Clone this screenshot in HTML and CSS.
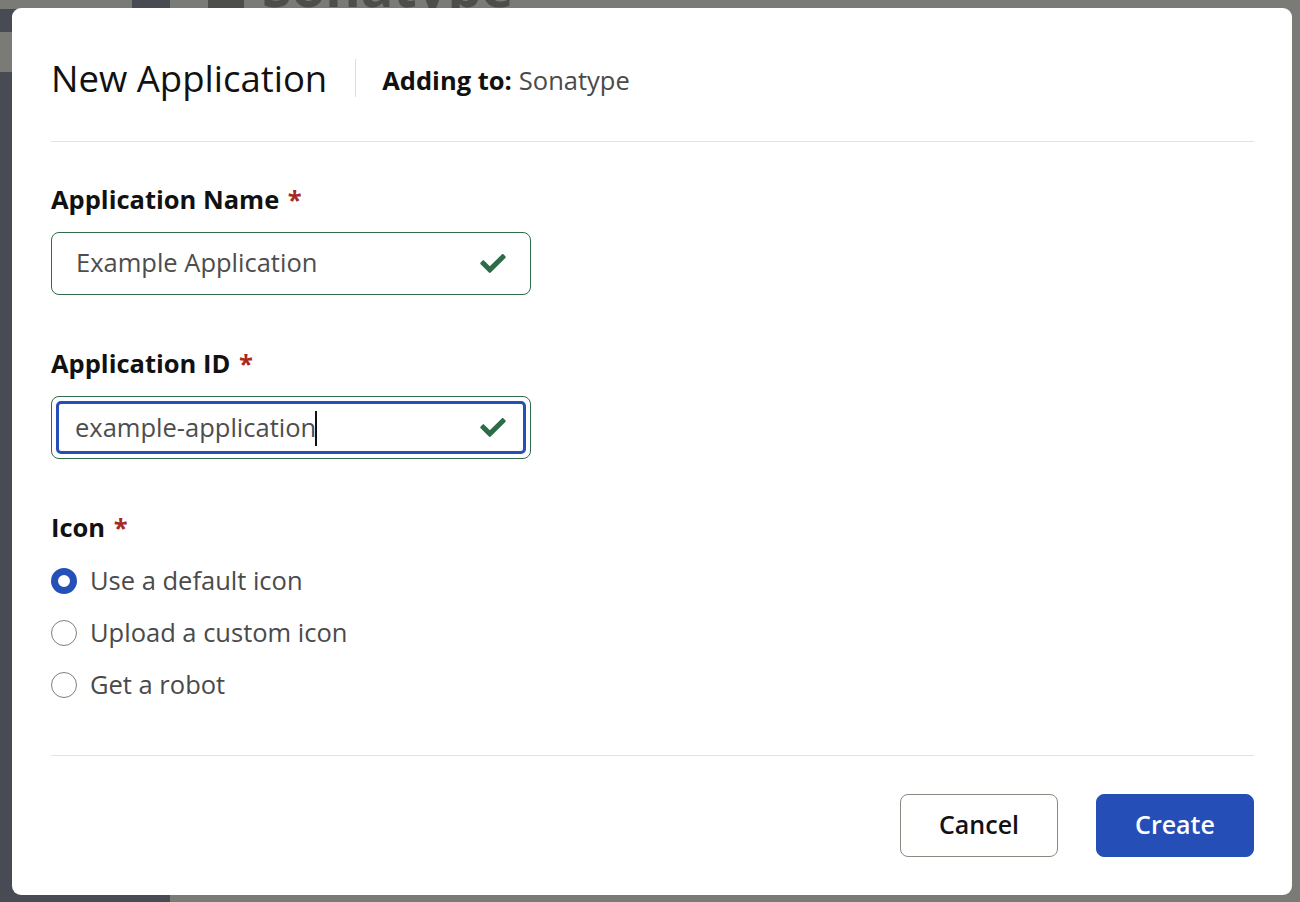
FILE: index.html
```html
<!DOCTYPE html>
<html>
<head>
<meta charset="utf-8">
<link rel="stylesheet" href="styles.css">
</head>
<body>
<div class="page">
  <aside class="sidebar">
    <div class="side-top"><span class="side-top-a"></span><span class="side-top-b"></span></div>
    <div class="side-item"></div>
    <div class="side-item active"></div>
  </aside>
  <main class="main">
    <div class="brand"><span class="brand-mark"></span><span class="brand-name">Sonatype</span></div>
  </main>
</div>

<div class="dialog">
  <header class="dialog-header">
    <h1 class="dialog-title">New Application</h1>
    <div class="dialog-sub"><strong>Adding to:</strong> Sonatype</div>
  </header>

  <section class="dialog-body">
    <div class="field">
      <div class="label">Application Name <span class="req">*</span></div>
      <div class="input valid">
        <span class="input-text">Example Application</span>
        <svg class="check" viewBox="0 0 512 382" width="26" height="19"><path d="M173.9 374.4l-166.4-166.4c-10-10-10-26.2 0-36.2l36.2-36.2c10-10 26.2-10 36.2 0L192 247.7 432.1 7.6c10-10 26.2-10 36.2 0l36.2 36.2c10 10 10 26.2 0 36.2l-294.4 294.4c-10 10-26.2 10-36.2 0z"/></svg>
      </div>
    </div>

    <div class="field">
      <div class="label">Application ID <span class="req">*</span></div>
      <div class="input valid focused">
        <div class="focus-ring">
          <span class="input-text">example-application<span class="caret"></span></span>
          <svg class="check" viewBox="0 0 512 382" width="26" height="19"><path d="M173.9 374.4l-166.4-166.4c-10-10-10-26.2 0-36.2l36.2-36.2c10-10 26.2-10 36.2 0L192 247.7 432.1 7.6c10-10 26.2-10 36.2 0l36.2 36.2c10 10 10 26.2 0 36.2l-294.4 294.4c-10 10-26.2 10-36.2 0z"/></svg>
        </div>
      </div>
    </div>

    <div class="field icon-field">
      <div class="label">Icon <span class="req">*</span></div>
      <div class="radios">
        <label class="radio"><span class="radio-dot checked"></span>Use a default icon</label>
        <label class="radio"><span class="radio-dot"></span>Upload a custom icon</label>
        <label class="radio"><span class="radio-dot"></span>Get a robot</label>
      </div>
    </div>
  </section>

  <footer class="dialog-footer">
    <button class="btn btn-secondary">Cancel</button>
    <button class="btn btn-primary">Create</button>
  </footer>
</div>
</body>
</html>
```

FILE: styles.css
```css
* { box-sizing: border-box; }
html, body { margin: 0; padding: 0; }
body {
  width: 1300px;
  height: 902px;
  overflow: hidden;
  background: #7a7a76;
  font-family: "Open Sans", "Noto Sans", "Liberation Sans", sans-serif;
}

.page { display: flex; height: 902px; }
.sidebar {
  width: 170px;
  background: #484b54;
  display: flex;
  flex-direction: column;
}
.side-top { display: flex; height: 9px; }
.side-top-a { width: 132px; background: #7a7a76; }
.side-top-b { flex: 1; background: #484b54; }
.side-item { height: 23px; }
.side-item.active { height: 40px; background: #7a7a76; }
.main { flex: 1; background: #7a7a76; }
.brand {
  display: flex;
  align-items: flex-end;
  gap: 18px;
  margin-left: 38px;
  height: 9px;
  overflow: hidden;
}
.brand-mark { width: 36px; height: 30px; background: #4d4e4a; flex: none; }
.brand-name {
  font-size: 54px;
  font-weight: 700;
  line-height: 1;
  color: #4d4e4a;
  margin-bottom: -4px;
}

.dialog {
  position: absolute;
  left: 12px;
  top: 8px;
  width: 1280px;
  height: 887px;
  background: #fff;
  border-radius: 9px;
  padding: 0 38px 0 39px;
  display: flex;
  flex-direction: column;
}

.dialog-header {
  display: flex;
  align-items: center;
  padding: 47px 0 40px;
  border-bottom: 1px solid #dfe3f0;
}
.dialog-title {
  margin: 0;
  font-size: 36.5px;
  font-weight: 400;
  line-height: 46px;
  color: #111;
}
.dialog-sub {
  margin-left: 28px;
  padding-left: 26px;
  border-left: 1px solid #dcdcdc;
  height: 38px;
  display: flex;
  align-items: center;
  gap: 7px;
  font-size: 25.5px;
  color: #4a4a4a;
  padding-top: 4px;
}
.dialog-sub strong { color: #111; font-weight: 700; }

.dialog-body {
  flex: 1;
  padding-top: 41px;
  border-bottom: 1px solid #dfe3f0;
}
.field { margin-bottom: 52px; }
.label {
  font-size: 25.5px;
  font-weight: 700;
  color: #111;
  line-height: 33px;
  margin-bottom: 16px;
}
.req { color: #a8271e; margin-left: 2px; }

.input {
  width: 480px;
  height: 63px;
  border: 1px solid #2e6b48;
  border-radius: 8px;
  display: flex;
  align-items: center;
  padding: 0 24px 0 24px;
}
.input-text {
  flex: 1;
  font-size: 25.5px;
  color: #4d4d4d;
  position: relative;
  top: -2px;
}
.check { fill: #2e6b48; flex: none; }

.input.focused { padding: 4px; }
.focus-ring {
  flex: 1;
  height: 100%;
  border: 3px solid #2550b8;
  border-radius: 5px;
  display: flex;
  align-items: center;
  padding: 0 17px 0 16px;
}
.focus-ring .input-text { top: 1px; }
.caret {
  display: inline-block;
  width: 2px;
  height: 35px;
  background: #111;
  vertical-align: middle;
  margin-left: -1px;
  position: relative;
  top: -1px;
}

.icon-field { margin-bottom: 0; }
.icon-field .label { margin-bottom: 20px; }
.radios { display: flex; flex-direction: column; gap: 19px; }
.radio {
  display: flex;
  align-items: center;
  gap: 13px;
  font-size: 25.5px;
  color: #4a4a4a;
  line-height: 33px;
}
.radio-dot {
  width: 26px;
  height: 26px;
  border-radius: 50%;
  border: 1.5px solid #7f7f78;
  flex: none;
}
.radio-dot.checked {
  border: 7px solid #2550b8;
  background: #fff;
}

.dialog-footer {
  display: flex;
  justify-content: flex-end;
  gap: 38px;
  padding: 38px 0 38px;
}
.btn {
  width: 158px;
  height: 63px;
  border-radius: 8px;
  font-family: inherit;
  font-size: 25px;
  font-weight: 600;
  padding: 0 0 4px;
  cursor: pointer;
}
.btn-secondary {
  background: #fff;
  color: #111;
  border: 1px solid #8a8a82;
}
.btn-primary {
  background: #254fb7;
  color: #fff;
  border: 1px solid #254fb7;
}
```
